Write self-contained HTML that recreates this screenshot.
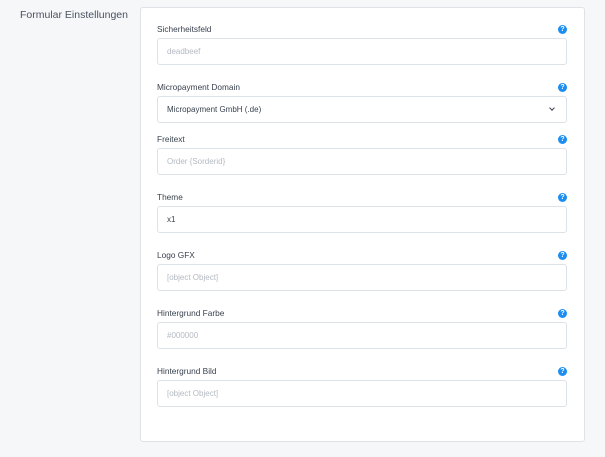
<!DOCTYPE html>
<html><head><meta charset="utf-8"><style>
body{margin:0;width:605px;height:457px;background:#f6f7f9;font-family:"Liberation Sans",sans-serif;position:relative;overflow:hidden}
.title{position:absolute;left:20px;top:9px;font-size:10.5px;color:#4a5260}
.card{position:absolute;left:140px;top:7px;width:443px;height:433px;background:#fff;border:1px solid #dfe3e8;border-radius:3px}
.lbl{position:absolute;left:157px;font-size:8.3px;color:#39424e}
.inp{position:absolute;left:157px;width:410px;height:27px;border:1px solid #dde2e8;border-radius:3px;background:#fff;box-sizing:border-box}
.inp span{position:absolute;left:9px;top:8px;font-size:8px;color:#b4bac2}
.inp span.v{color:#39424e}
.q{position:absolute;left:558px;width:9px;height:9px;border-radius:50%;background:#1c8ef0;color:#fff;font-size:7px;font-weight:bold;text-align:center;line-height:9px}
.chev{position:absolute;right:12px;top:9px;width:3px;height:3px;border-right:1.2px solid #39424e;border-bottom:1.2px solid #39424e;transform:rotate(45deg)}
</style></head><body>
<div class="title">Formular Einstellungen</div>
<div class="card"></div>

<div class="lbl" style="top:24px">Sicherheitsfeld</div><div class="q" style="top:25px">?</div>
<div class="inp" style="top:38px"><span>deadbeef</span></div>

<div class="lbl" style="top:82px">Micropayment Domain</div><div class="q" style="top:83px">?</div>
<div class="inp" style="top:96px"><span class="v">Micropayment GmbH (.de)</span><div class="chev"></div></div>

<div class="lbl" style="top:134px">Freitext</div><div class="q" style="top:135px">?</div>
<div class="inp" style="top:148px"><span>Order {Sorderid}</span></div>

<div class="lbl" style="top:192px">Theme</div><div class="q" style="top:193px">?</div>
<div class="inp" style="top:206px"><span class="v">x1</span></div>

<div class="lbl" style="top:250px">Logo GFX</div><div class="q" style="top:251px">?</div>
<div class="inp" style="top:264px"><span>[object Object]</span></div>

<div class="lbl" style="top:308px">Hintergrund Farbe</div><div class="q" style="top:309px">?</div>
<div class="inp" style="top:322px"><span>#000000</span></div>

<div class="lbl" style="top:366px">Hintergrund Bild</div><div class="q" style="top:367px">?</div>
<div class="inp" style="top:380px"><span>[object Object]</span></div>
</body></html>
